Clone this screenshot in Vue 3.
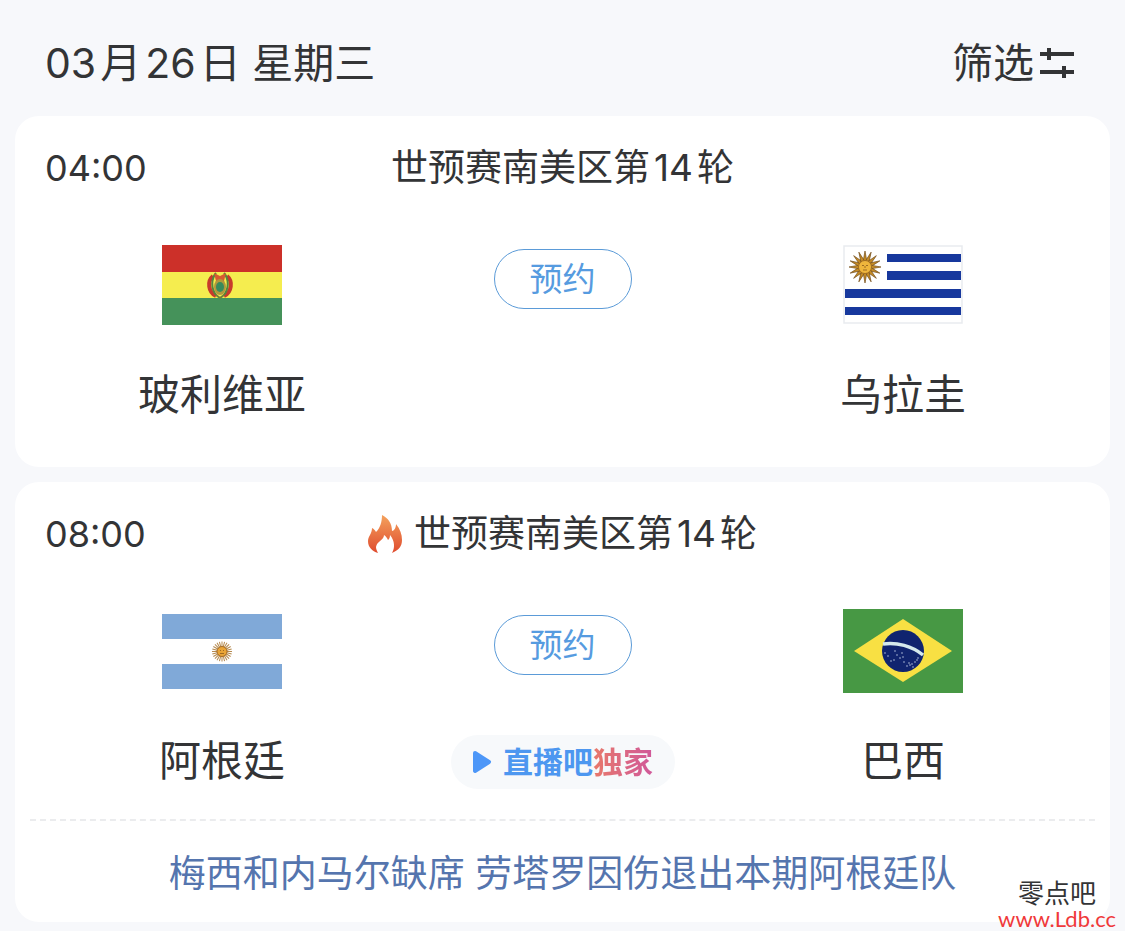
<script setup>
const rays = Array.from({ length: 16 }, (_, i) => i * 22.5)
const fineRays = Array.from({ length: 24 }, (_, i) => i * 15)

const matches = [
  { time: '04:00', round: '14', home: '玻利维亚', homeFlag: 'bolivia', away: '乌拉圭', awayFlag: 'uruguay' },
  {
    time: '08:00',
    round: '14',
    hot: true,
    home: '阿根廷',
    homeFlag: 'argentina',
    away: '巴西',
    awayFlag: 'brazil',
    exclusive: true,
    note: '梅西和内马尔缺席 劳塔罗因伤退出本期阿根廷队',
  },
]
const stars = [[54, 46], [57, 49], [51, 51], [45, 47], [60, 48], [61, 53], [66, 54], [69, 55], [72, 53], [74, 51], [70, 58], [67, 56], [75, 49], [42, 44], [59, 44], [48, 52], [52, 42], [64, 57]]
</script>

<template>
  <main class="page">
    <header class="top">
      <h1 class="date"><span class="lead">03</span>月<span class="num">26</span>日 星期三</h1>
      <button class="filter" type="button">
        <span>筛选</span>
        <svg class="filter-icon" viewBox="0 0 34 30" aria-hidden="true">
          <path d="M0 6H34M0 24H34M9 0V12M24 18V30" fill="none" stroke="#333436" stroke-width="4" />
        </svg>
      </button>
    </header>

    <section class="list">
      <article v-for="m in matches" :key="m.time" class="card" :class="{ noted: m.note }">
        <div class="heading">
          <time class="time">{{ m.time }}</time>
          <h2 class="title">
            <svg v-if="m.hot" class="fire" viewBox="0 0 34 40" aria-hidden="true">
              <defs>
                <linearGradient id="flame" x1="0" y1="0" x2="0" y2="1">
                  <stop offset="0" stop-color="#f4a25d" />
                  <stop offset="1" stop-color="#df4b2e" />
                </linearGradient>
              </defs>
              <path fill="url(#flame)" d="M14 1C20 4 24 9 24 17C26 17 28 14 28 10C32 15 34 20 34 26C34 32 31 36 24 39C27 34 27 27 22 21C22 24 21 25 20 26C19 24 18 22 16 21C16 26 9 27 8 33C8 35 9 37 10 39C4 37 0 33 0 27C0 22 4 20 4 14C6 15 7 16 8 18C12 14 14 8 14 1Z" />
            </svg>
            <span>世预赛南美区第<span class="num">{{ m.round }}</span>轮</span>
          </h2>
        </div>

        <div class="body">
          <div v-for="side in ['home', 'away']" :key="side" class="team" :class="side">
            <div class="flag-box">
              <svg v-if="m[side + 'Flag'] === 'bolivia'" class="flag" viewBox="0 0 120 80" role="img" :aria-label="m[side]">
                <path fill="#cc3029" d="M0 0H120V27H0Z" />
                <path fill="#f5ed4f" d="M0 27H120V53H0Z" />
                <path fill="#45925a" d="M0 53H120V80H0Z" />
                <path d="M51 31C45 36 46 47 54 51M65 31C71 36 70 47 62 51" fill="none" stroke="#c83a2c" stroke-width="4" />
                <path d="M54 28C49 34 49 43 54 50M62 28C67 34 67 43 62 50" fill="none" stroke="#55863e" stroke-width="2" />
                <path d="M52 28L58 31L64 28L62 36H54Z" fill="#d65b31" />
                <ellipse cx="58" cy="42" rx="6" ry="8" fill="#b1983c" />
                <ellipse cx="58" cy="42" rx="4" ry="5" fill="#388b5c" />
                <path d="M54 50L58 53L62 50" fill="none" stroke="#6e823a" stroke-width="2" />
              </svg>

              <svg v-else-if="m[side + 'Flag'] === 'uruguay'" class="flag" viewBox="0 0 120 80" role="img" :aria-label="m[side]">
                <path fill="#fff" stroke="#e9ebef" stroke-width="1.5" d="M1 1H119V78H1Z" />
                <path fill="#17389d" d="M44 9H118V17H44ZM44 26H118V35H44ZM2 44H118V53H2ZM2 62H118V70H2Z" />
                <g transform="translate(22 22)">
                  <path v-for="r in rays" :key="r" d="M-2 -5L0 -16L2 -5Z" :transform="`rotate(${r})`" fill="#c58b24" stroke="#75501e" stroke-width=".7" />
                  <circle r="6.500" fill="#efb63c" stroke="#946321" stroke-width=".8" />
                  <path d="M-3 -1.500H-1M1 -1.500H3M0 -1V1M-2 3H2" stroke="#8c5c1c" stroke-width=".8" />
                </g>
              </svg>

              <svg v-else-if="m[side + 'Flag'] === 'argentina'" class="flag" viewBox="0 0 120 75" role="img" :aria-label="m[side]">
                <path fill="#fff" d="M0 0H120V75H0Z" />
                <path fill="#80a9d8" d="M0 0H120V25H0ZM0 50H120V75H0Z" />
                <g transform="translate(60 37.500)">
                  <path v-for="r in fineRays" :key="r" d="M0 -4V-10" :transform="`rotate(${r})`" stroke="#b58a50" stroke-width="1" />
                  <circle r="5" fill="#e9a436" stroke="#a66b25" />
                  <path d="M-2 -1H-1M1 -1H2M-2 2H2" stroke="#8c5c1c" stroke-width=".8" />
                </g>
              </svg>

              <svg v-else class="flag" viewBox="0 0 120 84" role="img" :aria-label="m[side]">
                <path fill="#479844" d="M0 0H120V84H0Z" />
                <path fill="#f8e043" d="M11 42L60 10L109 42L60 73Z" />
                <circle cx="60" cy="42" r="21" fill="#10246f" />
                <path d="M40 35C54 33 69 37 80 46" fill="none" stroke="#d5e9ec" stroke-width="3.500" />
                <circle v-for="(s, i) in stars" :key="i" :cx="s[0]" :cy="s[1]" r=".7" fill="#d2def0" />
              </svg>
            </div>
            <span class="name">{{ m[side] }}</span>
          </div>

          <div class="middle">
            <button class="book" type="button">预约</button>
            <div v-if="m.exclusive" class="badge">
              <svg class="play" viewBox="0 0 20 24" aria-hidden="true">
                <path d="M3 3L17 12L3 21Z" fill="#4d97f8" stroke="#4d97f8" stroke-width="4" stroke-linejoin="round" />
              </svg>
              <span class="brand">直播吧<span class="only">独家</span></span>
            </div>
          </div>
        </div>

        <p v-if="m.note" class="note">{{ m.note }}</p>
      </article>
    </section>

    <aside class="mark">
      <span class="mark-name">零点吧</span>
      <span class="mark-url">www.Ldb.cc</span>
    </aside>
  </main>
</template>

<style>
body {
  margin: 0;
  background: #f7f8fb;
}
</style>

<style scoped>
.page {
  position: relative;
  box-sizing: border-box;
  min-height: 100vh;
  padding: 0 15px 9px;
  background: #f7f8fb;
  color: #333436;
  font-family: Inter, "Noto Sans CJK SC", sans-serif;
}
button {
  padding: 0;
  border: 0;
  background: none;
  color: inherit;
  font-family: inherit;
  cursor: pointer;
}
h1,
h2,
p {
  margin: 0;
  font-weight: 400;
}
.top {
  display: flex;
  align-items: center;
  justify-content: space-between;
  padding: 39px 36px 29px 30px;
}
.date,
.filter {
  font-size: 41px;
  line-height: 48px;
}
.lead {
  margin-right: 4px;
}
.num {
  margin: 0 4px;
}
.filter {
  display: flex;
  align-items: center;
  gap: 6px;
}
.filter-icon {
  width: 34px;
  height: 30px;
}
.list {
  display: grid;
  gap: 15px;
}
.card {
  padding: 28px 0 48px;
  border-radius: 24px;
  background: #fff;
}
.card.noted {
  padding-bottom: 24px;
}
.heading {
  display: grid;
  grid-template-columns: 1fr auto 1fr;
  padding: 0 30px;
  line-height: 48px;
}
.time {
  font-size: 36px;
}
.title {
  display: flex;
  align-items: center;
  gap: 12px;
  font-size: 37px;
}
.fire {
  width: 34px;
  height: 40px;
}
.body {
  display: grid;
  grid-template-columns: minmax(0, 1fr) 267px minmax(0, 1fr);
  margin-top: 51px;
}
.team {
  display: flex;
  flex-direction: column;
  align-items: center;
  gap: 44px;
  grid-row: 1;
}
.home {
  grid-column: 1;
}
.away {
  grid-column: 3;
}
.flag-box {
  display: flex;
  align-items: center;
  height: 84px;
}
.flag {
  display: block;
  width: 120px;
}
.name {
  font-size: 42px;
  line-height: 48px;
}
.middle {
  display: flex;
  flex-direction: column;
  align-items: center;
  gap: 60px;
  grid-column: 2;
  grid-row: 1;
  padding-top: 6px;
}
.book {
  width: 138px;
  height: 60px;
  border: 1px solid #5b9bd8;
  border-radius: 30px;
  color: #569be0;
  font-size: 33px;
  line-height: 48px;
}
.badge {
  display: flex;
  align-items: center;
  justify-content: center;
  gap: 11px;
  width: 224px;
  height: 54px;
  border-radius: 27px;
  background: #f7f9fb;
}
.play {
  width: 20px;
  height: 24px;
}
.brand {
  color: #4d97f0;
  font-size: 30px;
  font-weight: 700;
  line-height: 48px;
}
.only {
  background: linear-gradient(90deg, #e8796a, #d0589a);
  background-clip: text;
  color: transparent;
}
.note {
  margin: 30px 15px 0;
  padding-top: 29px;
  border-top: 2px dashed #ebecee;
  color: #5575ae;
  font-size: 37px;
  line-height: 48px;
  text-align: center;
}
.mark {
  position: absolute;
  right: 9px;
  bottom: 0;
  display: flex;
  flex-direction: column;
  align-items: center;
  font-family: Lato, "Noto Sans CJK SC", sans-serif;
}
.mark-name {
  font-size: 26px;
  line-height: 28px;
}
.mark-url {
  color: #f0393a;
  font-size: 22px;
  line-height: 24px;
}
</style>
